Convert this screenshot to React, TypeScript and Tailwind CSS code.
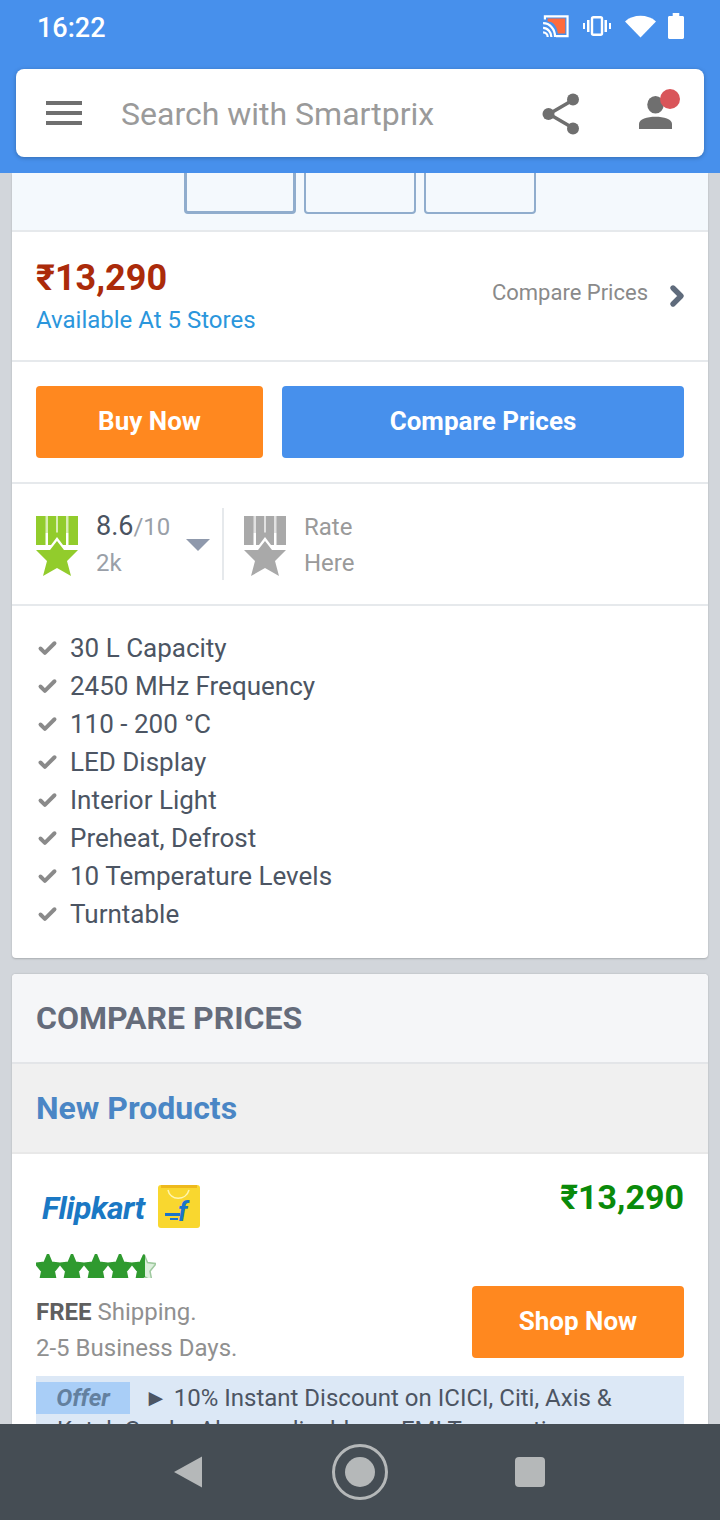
import React from 'react';
import { Check, ChevronRight } from 'lucide-react';

const specs = [
  '30 L Capacity',
  '2450 MHz Frequency',
  '110 - 200 °C',
  'LED Display',
  'Interior Light',
  'Preheat, Defrost',
  '10 Temperature Levels',
  'Turntable',
];

const Medal: React.FC<{ color: string }> = ({ color }) => (
  <svg width="42" height="60" viewBox="0 0 42 60">
    <path fill={color} opacity="0.35" d="M9 0H33V17H9Z" />
    <path fill={color} d="M0 0H9.5V29H0ZM32.5 0H42V29H32.5ZM12 0H20V17L21 16L22 17V0H30V29H27L21 21L15 29H12Z" />
    <path fill={color} d="M0 34H14L21 25L28 34H42L31 45L35 60L21 52L7 60L11 45Z" />
  </svg>
);

const starPath = 'M12 0L15.5 7.5L24 8.5L18 15L20 24L12 19.5L4 24L6 15L0 8.5L8.5 7.5Z';

const Star: React.FC<{ part?: boolean }> = ({ part }) => (
  <svg width="24" height="24" viewBox="0 0 24 21" preserveAspectRatio="none">
    {part && <path fill="#dcefdc" stroke="#9fc99f" strokeWidth="1.5" d={starPath} />}
    <path
      fill="#2f9a2f"
      stroke="#2f9a2f"
      strokeWidth="2"
      d={part ? 'M12 1V19.5L4 24L6 15L0 8.5L8.5 7.5Z' : starPath}
    />
  </svg>
);

export default function App() {
  return (
    <div className="flex h-[1520px] w-[720px] flex-col overflow-hidden bg-[#d2d6db] font-['Roboto',sans-serif]">
      {/* header */}
      <div className="z-10 h-[173px] shrink-0 bg-[#4790ec] px-4">
        <div className="flex h-[69px] items-start justify-between pl-[21px] pr-[20px]">
          <div className="flex h-[54px] items-center pt-[2px] text-[27px] font-medium text-white">16:22</div>
          <div className="flex h-[52px] items-center">
            <svg width="30" height="24" viewBox="0 0 30 26">
              <path fill="none" stroke="white" strokeWidth="2.4" d="M3 6V2.5H27.5V24H15" />
              <path fill="#ff6b3d" d="M6 5H25V21H17C16 13 12 8 6 8Z" />
              <path fill="none" stroke="white" strokeWidth="2.4" d="M1 10C8 10 14 16 14 25M1 15C6 15 10 20 10 25M1 20C4 20 6 22 6 25" />
            </svg>
            <svg width="28" height="20" viewBox="0 0 28 20" className="ml-[12px]">
              <rect x="9" y="1.2" width="10" height="17.6" rx="1.5" fill="none" stroke="white" strokeWidth="2.4" />
              <path fill="white" d="M4 4H6.5V16H4ZM21.5 4H24V16H21.5ZM0 7H2V13H0ZM26 7H28V13H26Z" />
            </svg>
            <svg width="31" height="24" viewBox="0 0 30 26" className="ml-[14px]" preserveAspectRatio="none">
              <path fill="white" d="M15 25.5L0 8C8 0 22 0 30 8Z" />
            </svg>
            <svg width="16" height="26" viewBox="0 0 17 27" className="ml-[12px]" preserveAspectRatio="none">
              <path fill="white" d="M5 0H12V3H15.5C16.3 3 17 3.7 17 4.5V25.5C17 26.3 16.3 27 15.5 27H1.5C.7 27 0 26.3 0 25.5V4.5C0 3.7.7 3 1.5 3H5Z" />
            </svg>
          </div>
        </div>
        <div className="flex h-[88px] items-center rounded-lg bg-white pl-[30px] pr-[24px] shadow-[0_1px_4px_rgba(0,0,0,0.25)]">
          <div className="flex w-[36px] flex-col gap-[6.5px]">
            <div className="h-[3.5px] bg-[#6f6f6f]" />
            <div className="h-[3.5px] bg-[#6f6f6f]" />
            <div className="h-[3.5px] bg-[#6f6f6f]" />
          </div>
          <span className="ml-[39px] flex-1 pt-[2px] text-[32px] leading-none text-[#9a9a9a]">Search with Smartprix</span>
          <svg width="38" height="42" viewBox="0 0 38 42" className="mr-[59px] mt-[1px]">
            <path fill="none" stroke="#6f6f6f" strokeWidth="3.5" d="M31 7L7 21L31 35" />
            <circle cx="31" cy="6.5" r="6" fill="#6f6f6f" />
            <circle cx="6.5" cy="21" r="6" fill="#6f6f6f" />
            <circle cx="31" cy="35.5" r="6" fill="#6f6f6f" />
          </svg>
          <div className="relative h-[44px] w-[41px]">
            <svg width="33" height="33" viewBox="0 0 32 32" className="absolute left-0 top-[5px]">
              <ellipse cx="16" cy="8.5" rx="8" ry="8.5" fill="#6f6f6f" />
              <path fill="#6f6f6f" d="M0 32V27C0 22 8 20 16 20C24 20 32 22 32 27V32Z" />
            </svg>
            <div className="absolute left-[21px] -top-[2px] h-[20px] w-[20px] rounded-full bg-[#d9555a]" />
          </div>
        </div>
      </div>

      {/* scrolled content */}
      <div className="flex-1 overflow-hidden px-3">
        <div className="rounded-b bg-white shadow-[0_1px_2px_rgba(0,0,0,0.2)]">
          <div className="flex h-[59px] justify-center gap-[8px] border-b-2 border-[#e6e9ec] bg-[#f4f9fd] pr-[1px]">
            <div className="-mt-1 h-[45px] w-[112px] rounded border-[3px] border-[#90adcd]" />
            <div className="-mt-1 h-[45px] w-[112px] rounded border-2 border-[#90adcd]" />
            <div className="-mt-1 h-[45px] w-[112px] rounded border-2 border-[#90adcd]" />
          </div>
          <div className="flex h-[130px] items-center justify-between border-b-2 border-[#e6e9ec] pl-6 pr-[15px]">
            <div className="mt-[2px]">
              <div className="text-[36px] leading-9 font-bold text-[#ab2b0a]">₹13,290</div>
              <div className="mt-[10px] text-[24px] leading-7 text-[#2b96dc]">Available At 5 Stores</div>
            </div>
            <div className="flex items-center gap-[13px]">
              <span className="mb-[8px] text-[22px] text-[#8a8a8a]">Compare Prices</span>
              <ChevronRight size={32} strokeWidth={4} className="text-[#5f6b7c]" />
            </div>
          </div>
          <div className="flex h-[122px] items-center gap-[19px] border-b-2 border-[#e6e9ec] px-6">
            <div className="flex h-[72px] w-[227px] items-center justify-center rounded bg-[#ff881f] pb-[2px] text-[26px] font-bold text-white">Buy Now</div>
            <div className="flex h-[72px] flex-1 items-center justify-center rounded bg-[#4790ec] pb-[2px] text-[26px] font-bold text-white">Compare Prices</div>
          </div>
          <div className="flex h-[122px] items-center border-b-2 border-[#e6e9ec] pl-6">
            <div className="mt-[4px]"><Medal color="#92cc2c" /></div>
            <div className="ml-[18px] w-[90px]">
              <div className="pt-[1px] text-[27px] leading-9 text-[#4a5361]">8.6<span className="text-[24px] text-[#9a9fa8]">/10</span></div>
              <div className="text-[24px] leading-9 text-[#9a9fa8]">2k</div>
            </div>
            <div className="mt-[2px] h-0 w-0 border-x-[12px] border-t-[12px] border-x-transparent border-t-[#8f99ac]" />
            <div className="ml-[12px] h-[72px] w-[2px] bg-[#e6e9ec]" />
            <div className="ml-[20px] mt-[4px]"><Medal color="#a9a9a9" /></div>
            <div className="ml-[18px] pt-[2px] text-[24px] leading-9 text-[#9a9a9a]">
              <div>Rate</div>
              <div>Here</div>
            </div>
          </div>
          <div className="px-6 pb-[25px] pt-[23px]">
            {specs.map((s) => (
              <div key={s} className="flex h-[38px] items-center">
                <Check size={21} strokeWidth={4.5} className="ml-[1px] text-[#8a8a8a]" />
                <span className="ml-[12px] text-[26px] text-[#4c5563]">{s}</span>
              </div>
            ))}
          </div>
        </div>

        <div className="mt-4 overflow-hidden rounded-t bg-white shadow-[0_0_2px_rgba(0,0,0,0.2)]">
          <div className="flex h-[90px] items-center border-b-2 border-[#e3e5e8] bg-[#f5f6f8] pl-6 text-[32px] font-bold text-[#656c7b]">COMPARE PRICES</div>
          <div className="flex h-[90px] items-center border-b-2 border-[#e8e8e8] bg-[#f0f0f0] pl-6 text-[32px] font-bold text-[#4a86c5]">New Products</div>
          <div className="px-6 pt-[23px]">
            <div className="flex items-start justify-between">
              <div>
                <div className="mt-[5px] flex h-[48px] items-center pl-[6px]">
                  <span className="pt-[3px] text-[32px] font-bold italic tracking-[-0.5px] text-[#1a78c4]">Flipkart</span>
                  <svg width="44" height="44" viewBox="0 0 44 44" className="ml-[12px]">
                    <rect x="1" y="1" width="42" height="43" rx="3" fill="#f9d72f" />
                    <path fill="#eeb91c" d="M4 1H40V4H4Z" />
                    <path fill="none" stroke="#fff6b0" strokeWidth="1.5" d="M11 6C13 17 29 17 32 6" />
                    <text x="21" y="37" fontFamily="Roboto" fontSize="27" fontWeight="700" fontStyle="italic" fill="#1b74c9">f</text>
                    <path fill="#1b74c9" d="M8 29H23V32H8ZM13 34H21V36H13Z" />
                  </svg>
                </div>
                <div className="mt-[24px] flex h-[24px] w-[120px] overflow-hidden">
                  <Star /><Star /><Star /><Star /><Star part />
                </div>
                <div className="mt-[16px] text-[24px] leading-9 text-[#909090]"><b className="font-bold text-[#5f5f5f]">FREE</b> Shipping.</div>
                <div className="text-[24px] leading-9 text-[#909090]">2-5 Business Days.</div>
              </div>
              <div className="flex flex-col items-end">
                <div className="text-[34px] leading-10 font-bold text-[#0a8a0a]">₹13,290</div>
                <div className="mt-[69px] flex h-[72px] w-[212px] items-center justify-center rounded bg-[#ff881f] pb-[2px] text-[26px] font-bold text-white">Shop Now</div>
              </div>
            </div>
            <div className="mt-[10px] h-[80px] bg-[#dce8f6] text-[24px] leading-[32px] text-[#4c5563]">
              <div className="pt-[6px]">
                <span className="float-left mr-[14px] flex h-[32px] w-[94px] items-center justify-center bg-[#a9cef7] font-bold italic text-[#63809f]">Offer</span>
                <span className="block">► 10% Instant Discount on ICICI, Citi, Axis &amp;</span>
                <span className="block pl-[21px]">Kotak Cards. Also applicable on EMI Transactions</span>
              </div>
            </div>
          </div>
        </div>
      </div>

      {/* android nav */}
      <div className="z-10 flex h-[96px] shrink-0 items-center bg-[#454d54] pl-[172px]">
        <svg width="32" height="34" viewBox="0 0 32 34"><path fill="#b5b8b9" d="M2 17L30 1.5V32.5Z" /></svg>
        <div className="ml-[128px] flex h-[56px] w-[56px] items-center justify-center rounded-full border-[3px] border-[#b5b8b9]">
          <div className="h-[30px] w-[30px] rounded-full bg-[#b5b8b9]" />
        </div>
        <div className="ml-[127px] h-[30px] w-[30px] rounded bg-[#b5b8b9]" />
      </div>
    </div>
  );
}
